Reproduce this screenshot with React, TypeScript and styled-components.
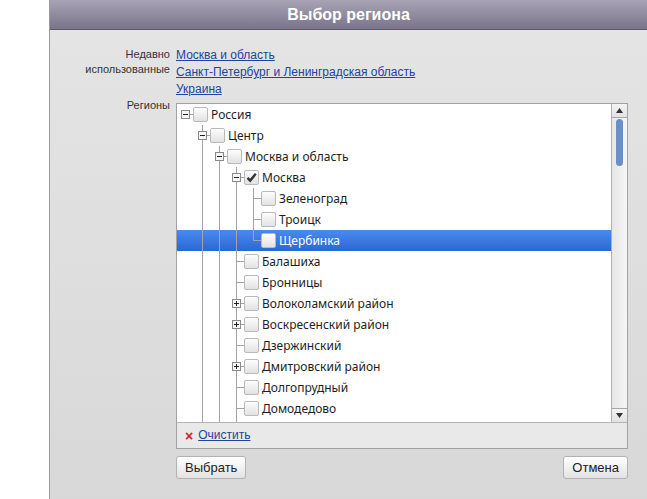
import React from "react";
import styled, {createGlobalStyle} from "styled-components";

const GlobalStyle = createGlobalStyle`
  html, body {
    margin: 0;
    padding: 0;
    background: #ffffff;
  }
  body {
    font-family: "Liberation Sans", Arial, sans-serif;
  }
`;

const Dialog = styled.div`
  margin-left: 49px;
  border-left: 1px solid #9c9c9c;
  min-height: 499px;
  display: flex;
  flex-direction: column;
`;

const Header = styled.div`
  height: 30px;
  box-sizing: border-box;
  border-bottom: 1px solid #5e5a68;
  background: linear-gradient(#a8a3b4, #79748a);
  color: #ffffff;
  font-family: "Liberation Sans", Arial, sans-serif;
  font-weight: bold;
  font-size: 16px;
  line-height: 29px;
  text-align: center;
`;

const Body = styled.div`
  flex: 1;
  display: grid;
  grid-template-columns: 120px 1fr;
  column-gap: 6px;
  align-content: start;
  padding: 17px 19px 0 0;
  background: linear-gradient(#e4e4e4, #d8d8d8);
`;

const Label = styled.div`
  text-align: right;
  font-size: 11px;
  line-height: 15px;
  color: #333333;
`;

const RegionsLabel = styled(Label)`
  line-height: 14px;
`;

const RecentList = styled.div`
  display: flex;
  flex-direction: column;
  align-items: flex-start;
`;

const Link = styled.a`
  font-size: 12px;
  line-height: 17px;
  color: #23439c;
  text-decoration: underline;
  cursor: pointer;
`;

const TreeBox = styled.div`
  margin-top: 5px;
  border: 1px solid #a2a2a2;
  display: flex;
  flex-direction: column;
`;

const TreeArea = styled.div`
  height: 318px;
  border-bottom: 1px solid #b4b4b4;
  background: #ffffff;
  display: flex;
`;

const TreeList = styled.div`
  flex: 1;
  overflow: hidden;
`;

const Row = styled.div<{$selected?: boolean}>`
  height: 21px;
  display: flex;
  align-items: center;
  background: ${(p) =>
    p.$selected ? "linear-gradient(#4a8aee, #2c67d6)" : "transparent"};
  color: ${(p) => (p.$selected ? "#ffffff" : "#1e1e1e")};
`;

const Guide = styled.svg`
  display: block;
  flex: none;
`;

const Checkbox = styled.span`
  flex: none;
  width: 15px;
  height: 15px;
  box-sizing: border-box;
  border: 1px solid #b9b9b9;
  border-radius: 2px;
  background: linear-gradient(#fdfdfd, #e2e2e2);
  display: flex;
  align-items: center;
  justify-content: center;
`;

const NodeText = styled.span`
  margin-left: 3px;
  font-family: "Noto Sans", "Open Sans", sans-serif;
  font-size: 12px;
  white-space: nowrap;
`;

const Scrollbar = styled.div`
  width: 15px;
  border-left: 1px solid #b0b0b0;
  background: linear-gradient(90deg, #e6e6e6, #f6f6f6);
  display: flex;
  flex-direction: column;
`;

const ScrollButton = styled.div<{$down?: boolean}>`
  height: 13px;
  ${(p) =>
    p.$down ? "border-top: 1px solid #a8a8a8;" : "border-bottom: 1px solid #a8a8a8;"}
  background: linear-gradient(#f4f4f4, #e2e2e2);
  display: flex;
  align-items: center;
  justify-content: center;
`;

const Track = styled.div`
  flex: 1;
  display: flex;
  justify-content: center;
  padding-top: 1px;
`;

const Thumb = styled.div`
  width: 7px;
  height: 47px;
  border-radius: 4px;
  background: #6a8ec6;
`;

const TreeFooter = styled.div`
  height: 25px;
  background: #e9e9e9;
  display: flex;
  align-items: center;
  padding-left: 8px;
  gap: 5px;
`;

const ClearMark = styled.span`
  color: #d42020;
  font-size: 14px;
  font-weight: bold;
  line-height: 1;
`;

const Buttons = styled.div`
  grid-column: 2;
  margin-top: 7px;
  display: flex;
  justify-content: space-between;
`;

const Button = styled.button`
  height: 23px;
  padding: 0 8px;
  border: 1px solid #b2b2b2;
  border-radius: 3px;
  background: linear-gradient(#ffffff, #e3e3e3);
  font-family: "Liberation Sans", Arial, sans-serif;
  font-size: 13px;
  color: #222222;
  cursor: pointer;
`;

type GuideKind = "none" | "line" | "tee" | "elbow" | "root";

type Node = {
  label: string;
  guides: GuideKind[];
  own?: GuideKind;
  exp?: "minus" | "plus";
  checked?: boolean;
  selected?: boolean;
};

const L3: GuideKind[] = ["none", "line", "line"];
const L4: GuideKind[] = ["none", "line", "line", "line"];

const nodes: Node[] = [
  {label: "Россия", guides: [], own: "root", exp: "minus"},
  {label: "Центр", guides: ["none"], own: "tee", exp: "minus"},
  {label: "Москва и область", guides: ["none", "line"], own: "tee", exp: "minus"},
  {label: "Москва", guides: L3, own: "tee", exp: "minus", checked: true},
  {label: "Зеленоград", guides: L4, own: "tee"},
  {label: "Троицк", guides: L4, own: "tee"},
  {label: "Щербинка", guides: L4, own: "elbow", selected: true},
  {label: "Балашиха", guides: L3, own: "tee"},
  {label: "Бронницы", guides: L3, own: "tee"},
  {label: "Волоколамский район", guides: L3, own: "tee", exp: "plus"},
  {label: "Воскресенский район", guides: L3, own: "tee", exp: "plus"},
  {label: "Дзержинский", guides: L3, own: "tee"},
  {label: "Дмитровский район", guides: L3, own: "tee", exp: "plus"},
  {label: "Долгопрудный", guides: L3, own: "tee"},
  {label: "Домодедово", guides: L3, own: "tee"},
  // next row, scrolled out of view: only its guide lines peek in
  {label: "", guides: L4},
];

const LINE = "#a3a3a3";

function GuideCell({
  kind,
  width,
  exp,
}: {
  kind: GuideKind;
  width: number;
  exp?: "minus" | "plus";
}) {
  return (
    <Guide width={width} height={21} shapeRendering="crispEdges">
      {(kind === "line" || kind === "tee") && (
        <line x1={8.5} y1={0} x2={8.5} y2={21} stroke={LINE} />
      )}
      {kind === "elbow" && <line x1={8.5} y1={0} x2={8.5} y2={11} stroke={LINE} />}
      {(kind === "tee" || kind === "elbow" || kind === "root") && (
        <line x1={8.5} y1={10.5} x2={width} y2={10.5} stroke={LINE} />
      )}
      {exp && (
        <g>
          <rect x={4.5} y={6.5} width={8} height={8} fill="#f6f6f6" stroke="#8a8a8a" />
          <line x1={6} y1={10.5} x2={11} y2={10.5} stroke="#222" />
          {exp === "plus" && <line x1={8.5} y1={8} x2={8.5} y2={13} stroke="#222" />}
        </g>
      )}
    </Guide>
  );
}

function TreeRow({node}: {node: Node}) {
  return (
    <Row $selected={node.selected}>
      {node.guides.map((g, i) => (
        <GuideCell key={i} kind={g} width={17} />
      ))}
      {node.own && (
        <>
          <GuideCell kind={node.own} width={16} exp={node.exp} />
          <Checkbox>
            {node.checked && (
              <svg width={11} height={11} viewBox="0 0 11 11">
                <path
                  d="M1.5 5.8 L4.2 8.6 L9.8 1.8"
                  fill="none"
                  stroke="#333"
                  strokeWidth={2.4}
                />
              </svg>
            )}
          </Checkbox>
          <NodeText>{node.label}</NodeText>
        </>
      )}
    </Row>
  );
}

export default function App() {
  return (
    <>
      <GlobalStyle />
      <Dialog>
        <Header>Выбор региона</Header>
        <Body>
          <Label>
            Недавно
            <br />
            использованные
          </Label>
          <RecentList>
            <Link>Москва и область</Link>
            <Link>Санкт-Петербург и Ленинградская область</Link>
            <Link>Украина</Link>
          </RecentList>
          <RegionsLabel>Регионы</RegionsLabel>
          <TreeBox>
            <TreeArea>
              <TreeList>
                {nodes.map((n, i) => (
                  <TreeRow key={i} node={n} />
                ))}
              </TreeList>
              <Scrollbar>
                <ScrollButton>
                  <svg width={7} height={5}>
                    <path d="M3.5 0 L7 5 L0 5 Z" fill="#333" />
                  </svg>
                </ScrollButton>
                <Track>
                  <Thumb />
                </Track>
                <ScrollButton $down>
                  <svg width={7} height={5}>
                    <path d="M0 0 L7 0 L3.5 5 Z" fill="#333" />
                  </svg>
                </ScrollButton>
              </Scrollbar>
            </TreeArea>
            <TreeFooter>
              <ClearMark>×</ClearMark>
              <Link>Очистить</Link>
            </TreeFooter>
          </TreeBox>
          <Buttons>
            <Button>Выбрать</Button>
            <Button>Отмена</Button>
          </Buttons>
        </Body>
      </Dialog>
    </>
  );
}
